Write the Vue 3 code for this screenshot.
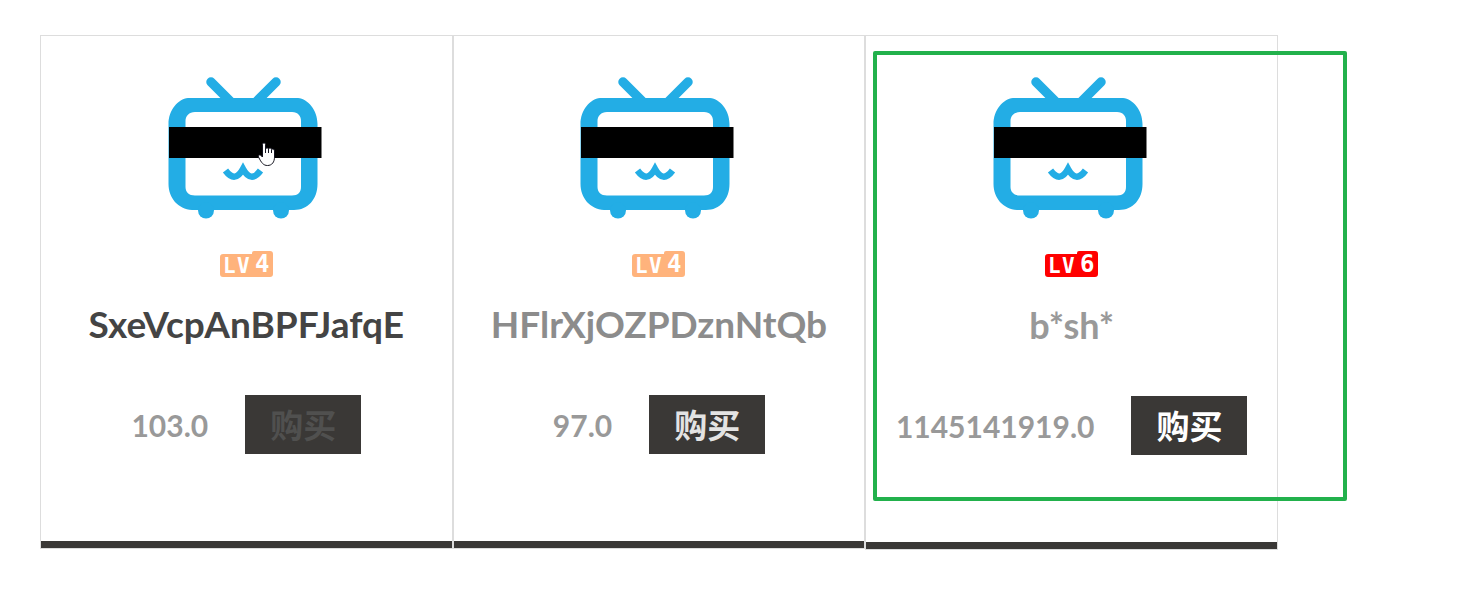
<script setup>
const cards = [
  { name: 'SxeVcpAnBPFJafqE', price: '103.0', level: 4, state: 'hovered' },
  { name: 'HFlrXjOZPDznNtQb', price: '97.0', level: 4, state: 'fading' },
  { name: 'b*sh*', price: '1145141919.0', level: 6, state: 'marked' }
]
</script>

<template>
  <main class="shop">
    <article v-for="card in cards" :key="card.name" class="card" :class="card.state">
      <svg class="tv" viewBox="168 76 157 144" aria-hidden="true">
        <g fill="none" stroke="#23ade5">
          <path d="M211 82L230 101M276 82L257 101" stroke-width="9.5" stroke-linecap="round" />
          <path d="M225.500 170.500Q235 183.500 243 169Q251 183.500 260.500 170.500" stroke-width="6.500" />
        </g>
        <path
          fill="#23ade5" fill-rule="evenodd"
          d="M188 98H298C308 99 317.500 110 317.500 124V184C317.500 199 308 210 294 210H192C178 209 168.500 198 168.500 184V124C168.500 110 178 99 188 98ZM195 112C189 112 185.500 116 185.500 121V187C185.500 192 189 195.500 195 195.500H292C298 195.500 301 192 301 187V121C301 116 298 112 292 112Z" />
        <circle cx="206" cy="210.500" r="8" fill="#23ade5" />
        <circle cx="281" cy="210.500" r="8" fill="#23ade5" />
        <rect x="169" y="127" width="152.500" height="31" fill="#000" />
        <path
          v-if="card.state === 'hovered'"
          d="M262.500 144.500C262.500 142.500 265.500 142.500 265.500 144.500V149C266 147.500 268.500 147.500 268.500 149C269.500 147.500 271.500 148 271.500 149.500C273 148.500 274.500 149.500 274.500 151V157C274.500 162 272 165.500 267.500 165.500C263.500 165.500 261.500 163 258.500 157C257.500 155 260 154 261.500 156L262.500 157ZM265.500 149V153M268.500 149V153M271.500 150V153"
          fill="#fff" stroke="#14141f" stroke-width="1" stroke-linejoin="round" />
      </svg>
      <svg class="badge" viewBox="0 0 53 27" role="img" :aria-label="`Level ${card.level}`">
        <path d="M3 3H32V2Q32 0 34 0H50Q53 0 53 3V23Q53 26 50 26H3Q0 26 0 23V6Q0 3 3 3Z" />
        <text x="3" y="22">L</text>
        <text x="17" y="22">V</text>
        <text class="digit" x="35" y="21">{{ card.level }}</text>
      </svg>
      <h2>{{ card.name }}</h2>
      <div class="purchase">
        <span class="price">{{ card.price }}</span>
        <button type="button">购买</button>
      </div>
    </article>
  </main>
</template>

<style>
body {
  background: #fff;
}
</style>

<style scoped>
.shop {
  display: grid;
  grid-template-columns: repeat(3, 1fr);
  align-items: start;
  padding: 35px 201px 42px 40px;
  font-family: Lato, "Noto Sans CJK SC", sans-serif;
}

.card {
  position: relative;
  display: flex;
  flex-direction: column;
  align-items: center;
  border: 1px solid #ddd;
  padding-top: 40px;
}

.card::after {
  content: "";
  align-self: stretch;
  height: 7px;
  margin-top: 87px;
  background: #3a3836;
}

.tv {
  width: 157px;
  height: 144px;
}

.badge {
  width: 53px;
  height: 27px;
  margin-top: 31px;
  fill: #ffb37c;
}

.badge text {
  fill: #fff;
  font: bold 21px "DejaVu Sans Mono", monospace;
}

.badge .digit {
  font-size: 24px;
}

h2 {
  margin: 23px 0 0;
  font-size: 37px;
  line-height: 46px;
  font-weight: 700;
  color: #8c8c8c;
}

.purchase {
  display: flex;
  align-items: center;
  gap: 37px;
  margin-top: 48px;
}

.price {
  font-size: 30px;
  line-height: 40px;
  font-weight: 700;
  color: #999;
}

button {
  width: 116px;
  height: 59px;
  padding: 0 0 2px;
  border: 0;
  background: #3a3836;
  color: #fff;
  font: bold 33px "Noto Sans CJK SC", sans-serif;
}

.hovered h2 {
  color: #444;
}

.hovered button {
  color: #50504f;
  cursor: pointer;
}

.fading button {
  color: #e3e3e3;
}

.marked .badge {
  fill: #f00;
}

.marked h2 {
  margin-top: 24px;
  font-size: 36px;
  color: #999;
}

.marked::before {
  content: "";
  position: absolute;
  inset: 15px -70px 48px 7px;
  border: 4px solid #22b14c;
  border-radius: 2px;
}
</style>
